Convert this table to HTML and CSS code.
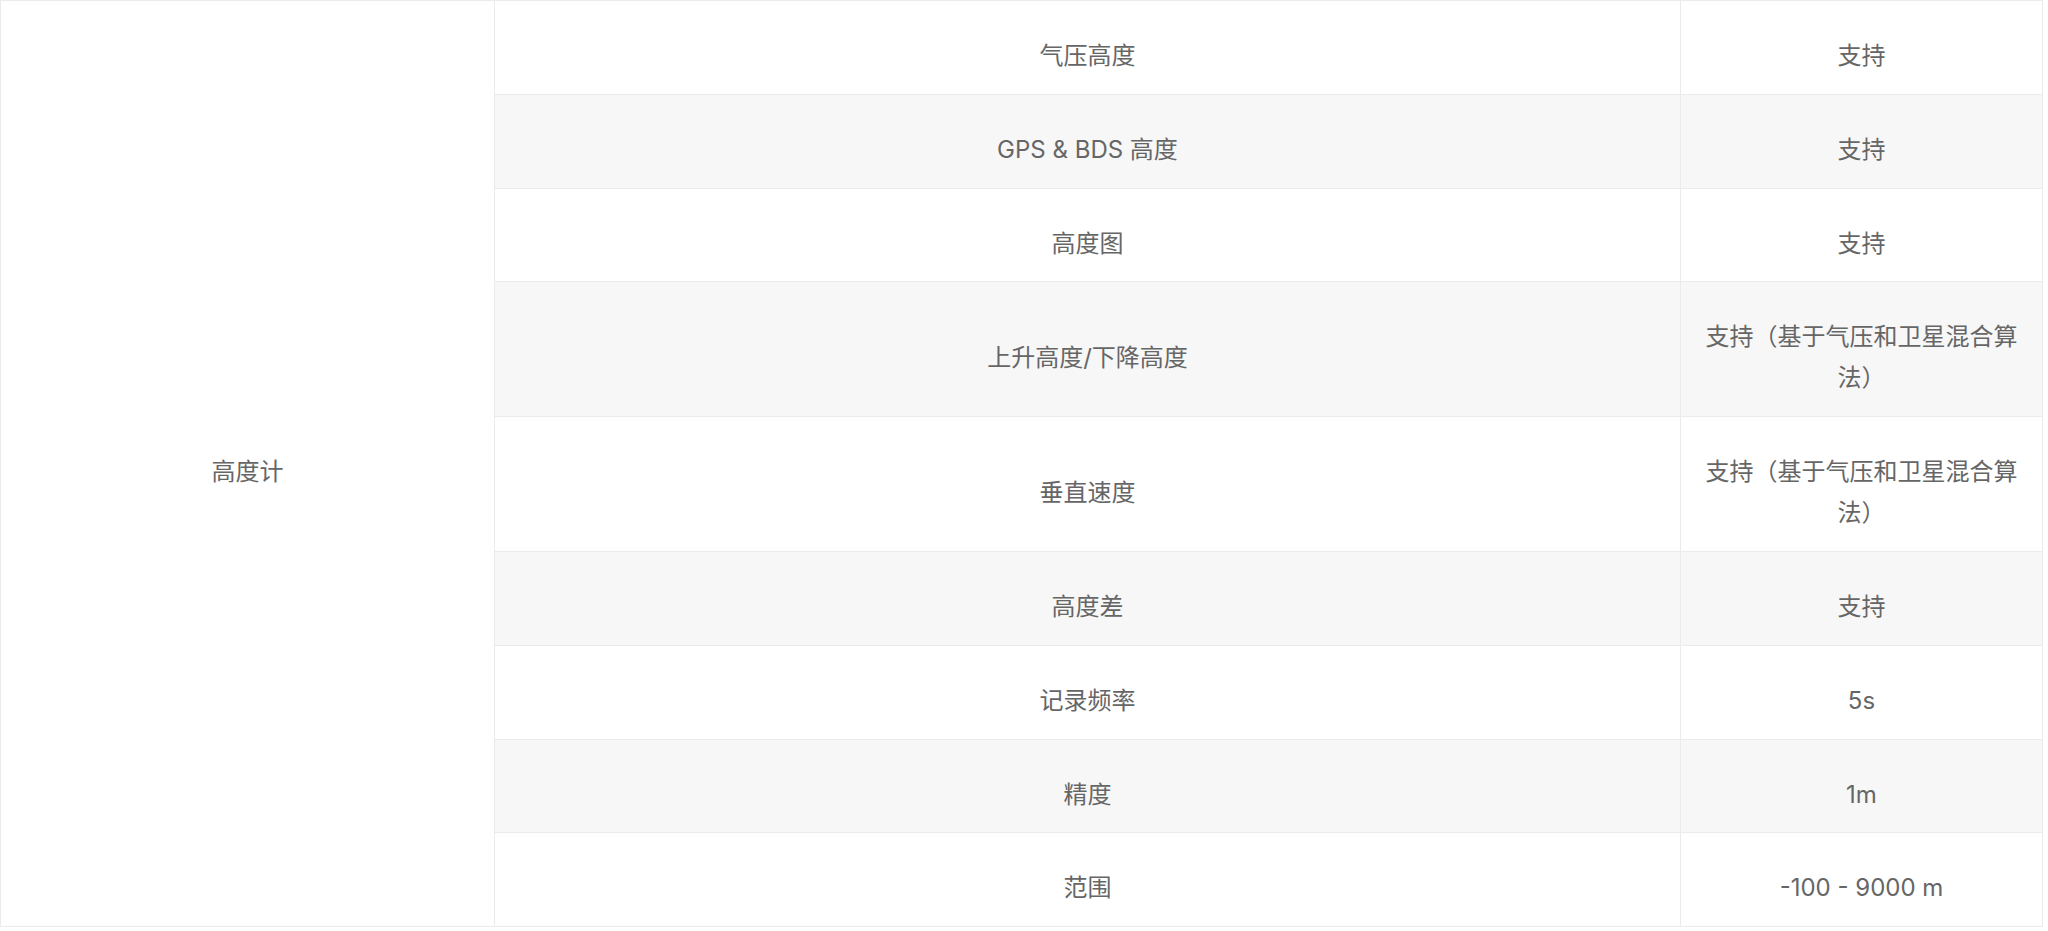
FILE: index.html
```html
<!DOCTYPE html>
<html lang="zh-CN">
<head>
<meta charset="utf-8">
<title>高度计</title>
<link rel="stylesheet" href="styles.css">
</head>
<body>
<table class="spec">
  <colgroup>
    <col class="col-group">
    <col class="col-item">
    <col class="col-value">
  </colgroup>
  <tbody>
    <tr>
      <td class="group" rowspan="9">高度计</td>
      <td>气压高度</td>
      <td>支持</td>
    </tr>
    <tr class="alt">
      <td>GPS &amp; BDS 高度</td>
      <td>支持</td>
    </tr>
    <tr>
      <td>高度图</td>
      <td>支持</td>
    </tr>
    <tr class="alt">
      <td>上升高度/下降高度</td>
      <td>支持（基于气压和卫星混合算法）</td>
    </tr>
    <tr>
      <td>垂直速度</td>
      <td>支持（基于气压和卫星混合算法）</td>
    </tr>
    <tr class="alt">
      <td>高度差</td>
      <td>支持</td>
    </tr>
    <tr>
      <td>记录频率</td>
      <td>5s</td>
    </tr>
    <tr class="alt">
      <td>精度</td>
      <td>1m</td>
    </tr>
    <tr>
      <td>范围</td>
      <td>-100 - 9000 m</td>
    </tr>
  </tbody>
</table>
</body>
</html>
```

FILE: styles.css
```css
html, body {
  margin: 0;
  padding: 0;
  background: #ffffff;
}

.spec {
  width: 2042px;
  border-collapse: collapse;
  table-layout: fixed;
  font-family: Inter, "Noto Sans CJK SC", sans-serif;
  font-size: 24px;
  line-height: 41px;
  color: #666666;
}

.col-group { width: 494px; }
.col-item { width: 1186px; }
.col-value { width: 362px; }

.spec td {
  border: 1px solid #ebebeb;
  padding: 34px 20px 17.8px;
  text-align: center;
  vertical-align: middle;
  background: #ffffff;
}

.spec tr.alt td {
  background: #f7f7f7;
}

.spec td.group {
  background: #ffffff;
}
```
